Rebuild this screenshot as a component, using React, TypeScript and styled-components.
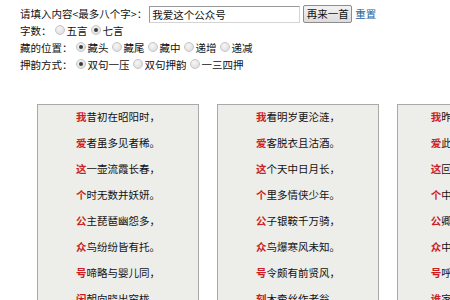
import React from 'react';
import styled, { createGlobalStyle } from 'styled-components';

const GlobalStyle = createGlobalStyle`
	html, body {
		margin: 0;
		padding: 0;
		background: #fff;
		overflow: hidden;
	}
	body {
		font-family: "Noto Sans CJK SC", "Noto Sans", sans-serif;
		font-size: 10.5px;
		color: #111;
	}
`;

const Page = styled.div`
	width: 450px;
	height: 300px;
	overflow: hidden;
`;

const Form = styled.form`
	display: flex;
	flex-direction: column;
	padding: 5px 0 0 20px;
`;

const Row = styled.div<{ $tall?: boolean }>`
	display: flex;
	align-items: center;
	height: ${({ $tall }) => ($tall ? '18px' : '17px')};
	white-space: nowrap;
	line-height: 1;
`;

const Label = styled.span`
	color: #111;
`;

const TextBox = styled.input`
	box-sizing: border-box;
	width: 151px;
	height: 17px;
	margin: 0 3px 0 2px;
	padding: 0 2px;
	font: inherit;
	font-size: 10.5px;
	color: #111;
	border: 1px solid #9a9a9a;
	border-right-color: #d4d4d4;
	border-bottom-color: #d4d4d4;
	background: #fff;
	outline: none;
`;

const Button = styled.button`
	box-sizing: border-box;
	height: 18px;
	width: 49px;
	padding: 0;
	margin: 0 3px 0 0;
	font: inherit;
	font-size: 10.5px;
	color: #111;
	border: 1px solid #8c8c8c;
	border-radius: 2px;
	background: linear-gradient(#f3f3f3, #dcdcdc);
	cursor: pointer;
`;

const Link = styled.a`
	color: #1c5f9e;
	text-decoration: none;
	cursor: pointer;
`;

const RadioDot = styled.span<{ $checked?: boolean }>`
	position: relative;
	display: inline-block;
	box-sizing: border-box;
	width: 10px;
	height: 10px;
	margin: -4px 2px 0 3px;
	border-radius: 50%;
	border: 1px solid #c6c6c6;
	background: radial-gradient(circle at 40% 35%, #f6f6f6, #d8d8d8);

	&::after {
		content: '';
		display: ${({ $checked }) => ($checked ? 'block' : 'none')};
		position: absolute;
		left: 2px;
		top: 2px;
		width: 4px;
		height: 4px;
		border-radius: 50%;
		background: #3a3a3a;
	}
`;

const Option = styled.label`
	display: inline-flex;
	align-items: center;
	cursor: pointer;
`;

const Panels = styled.div`
	display: flex;
	gap: 18px;
	margin-top: 30px;
	padding-left: 37px;
`;

const Panel = styled.div`
	flex: none;
	box-sizing: border-box;
	width: 162px;
	height: 240px;
	padding-top: 5px;
	background: #ededea;
	border: 1px solid #a9a9a9;
	text-align: center;
`;

const Line = styled.p`
	height: 14px;
	margin: 0 0 12px;
	line-height: 14px;
	white-space: nowrap;
	color: #111;
`;

const Head = styled.b`
	color: #cc1e24;
	font-weight: bold;
`;

type RadioProps = { label: string; checked?: boolean };

const Radio = ({ label, checked }: RadioProps) => (
	<Option>
		<RadioDot $checked={checked} />
		{label}
	</Option>
);

const poems: string[][] = [
	[
		'我昔初在昭阳时，',
		'爱者虽多见者稀。',
		'这一壶流霞长春，',
		'个时无数并妖妍。',
		'公主琵琶幽怨多，',
		'众鸟纷纷皆有托。',
		'号啼略与婴儿同，',
		'闲朝向晓出帘栊。',
	],
	[
		'我看明岁更沦涟，',
		'爱客脱衣且沽酒。',
		'这个天中日月长，',
		'个里多情侠少年。',
		'公子银鞍千万骑，',
		'众鸟爆寒风未知。',
		'号令颇有前贤风，',
		'刻木牵丝作老翁。',
	],
	[
		'我昨东郊看牡丹花，',
		'爱此溪水闲乘月归。',
		'这回相见不无缘分，',
		'个中滋味谁人能知。',
		'公卿不遣相逢何处，',
		'众中遥见暗留心意。',
		'号呼难与故人同言，',
		'谁家玉笛暗飞声去。',
	],
];

export default function App() {
	return (
		<Page>
			<GlobalStyle />
			<Form onSubmit={(e) => e.preventDefault()}>
				<Row $tall>
					<Label>请填入内容&lt;最多八个字&gt;：</Label>
					<TextBox defaultValue="我爱这个公众号" />
					<Button type="button">再来一首</Button>
					<Link>重置</Link>
				</Row>
				<Row>
					<Label>字数：</Label>
					<Radio label="五言" />
					<Radio label="七言" checked />
				</Row>
				<Row>
					<Label>藏的位置：</Label>
					<Radio label="藏头" checked />
					<Radio label="藏尾" />
					<Radio label="藏中" />
					<Radio label="递增" />
					<Radio label="递减" />
				</Row>
				<Row>
					<Label>押韵方式：</Label>
					<Radio label="双句一压" checked />
					<Radio label="双句押韵" />
					<Radio label="一三四押" />
				</Row>
			</Form>
			<Panels>
				{poems.map((poem, i) => (
					<Panel key={i}>
						{poem.map((line, j) => (
							<Line key={j}>
								<Head>{line[0]}</Head>
								{line.slice(1)}
							</Line>
						))}
					</Panel>
				))}
			</Panels>
		</Page>
	);
}
